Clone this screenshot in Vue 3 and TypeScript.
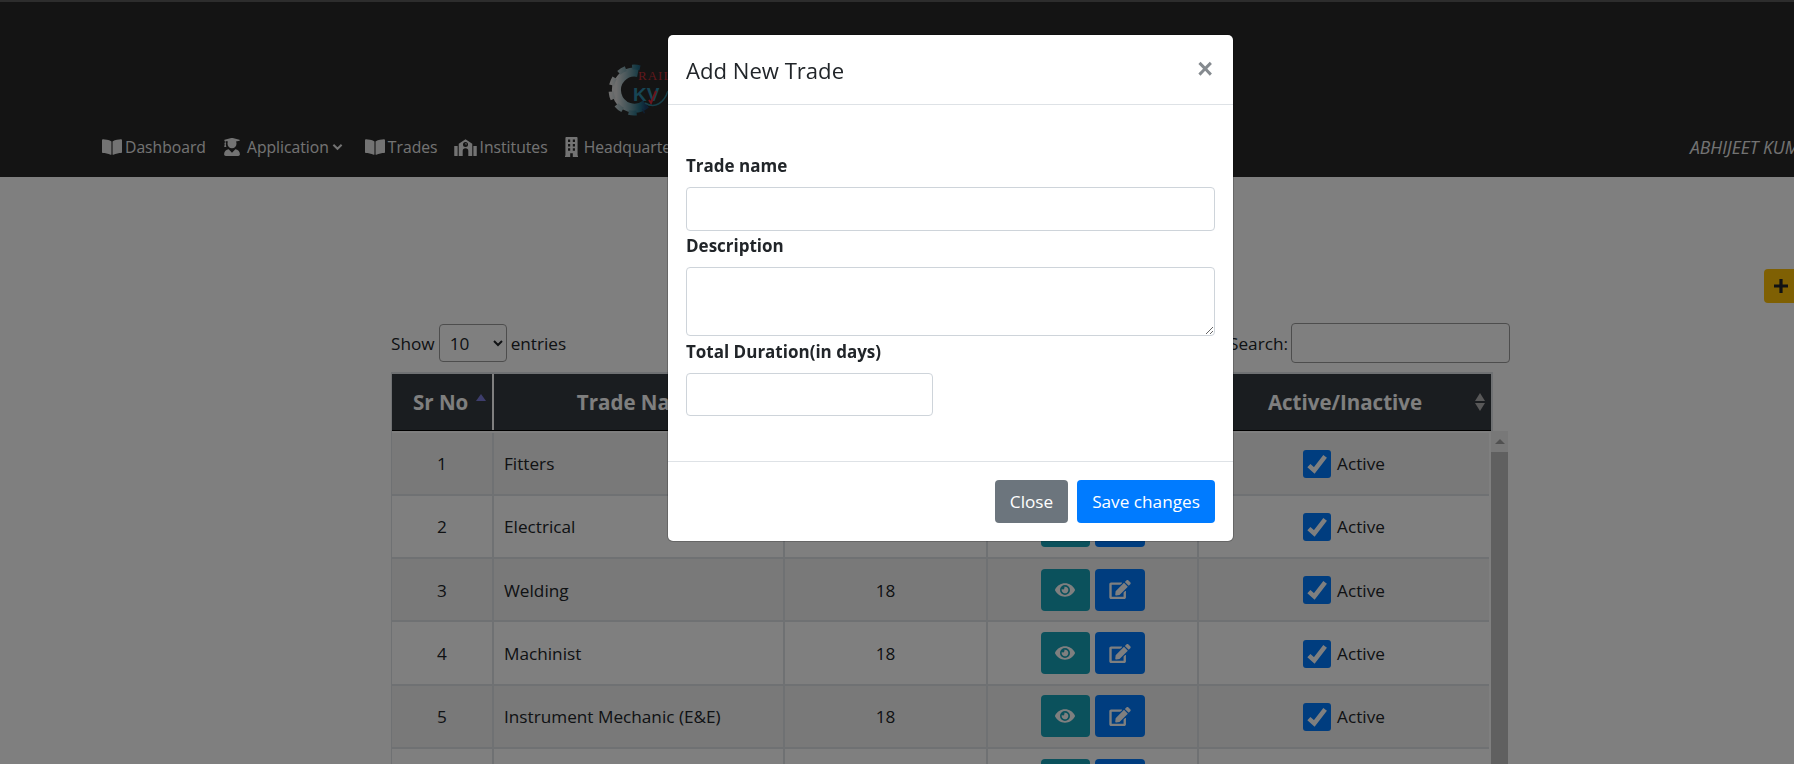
<script setup lang="ts">
interface Row { no: string; name: string; dur: string }
const rows: Row[] = [
  { no: '1', name: 'Fitters', dur: '18' },
  { no: '2', name: 'Electrical', dur: '18' },
  { no: '3', name: 'Welding', dur: '18' },
  { no: '4', name: 'Machinist', dur: '18' },
  { no: '5', name: 'Instrument Mechanic (E&E)', dur: '18' },
  { no: '', name: '', dur: '' },
]
const book = 'M542.22 32.05c-54.8 3.11-163.72 14.43-230.96 55.59-4.64 2.84-7.27 7.89-7.27 13.17v363.87c0 11.55 12.63 18.85 23.28 13.49 69.18-34.82 169.23-44.32 218.7-46.92 16.89-.89 30.02-14.43 30.02-30.66V62.75c.01-17.71-15.35-31.74-33.77-30.7zM264.73 87.64C197.5 46.48 88.58 35.17 33.78 32.05 15.36 31.01 0 45.04 0 62.75V400.6c0 16.24 13.13 29.78 30.02 30.66 49.49 2.6 149.59 12.11 218.77 46.95 10.62 5.35 23.21-1.94 23.21-13.46V100.63c0-5.29-2.62-10.14-7.27-12.99z'
const grad = 'M319.4 320.6L224 416l-95.4-95.4C57.1 323.7 0 382.2 0 454.4v9.6c0 26.5 21.5 48 48 48h352c26.5 0 48-21.5 48-48v-9.6c0-72.2-57.1-130.7-128.6-133.8zM13.6 79.8l6.4 1.5v58.4c-7 4.2-12 11.5-12 20.3 0 8.4 4.6 15.4 11.1 19.7L3.5 242c-1.7 6.9 2.1 14 7.6 14h41.8c5.5 0 9.3-7.1 7.6-14l-15.6-62.3C51.4 175.4 56 168.4 56 160c0-8.8-5-16.1-12-20.3V87.1l66 15.9c-8.6 17.2-14 36.4-14 57 0 70.7 57.3 128 128 128s128-57.3 128-128c0-20.6-5.3-39.8-14-57l96.3-23.2c18.2-4.4 18.2-27.1 0-31.5l-190.4-46c-13-3.1-26.7-3.1-39.7 0L13.6 48.2c-18.1 4.4-18.1 27.2 0 31.6z'
const school = 'M0 224h96v288H16c-9 0-16-7-16-16zM544 224h96v272c0 9-7 16-16 16h-80zM320 32L128 160v352h112V368a80 80 0 0 1 160 0v144h112V160zM320 112a72 72 0 1 1 0 144 72 72 0 0 1 0-144zM320 144v44h36v-22h-14v-22z'
const building = 'M32 0h384c18 0 32 14 32 32v448h16v32H272v-96h-96v96H-16v-32h16V32C0 14 14 0 32 0zM96 64v64h80V64zM272 64v64h80V64zM96 176v64h80v-64zM272 176v64h80v-64zM96 288v64h80v-64zM272 288v64h80v-64z'
const eye = 'M572.52 241.4C518.29 135.59 410.93 64 288 64S57.68 135.64 3.48 241.41a32.35 32.35 0 0 0 0 29.19C57.71 376.41 165.07 448 288 448s230.32-71.64 284.52-177.41a32.35 32.35 0 0 0 0-29.19zM288 400a144 144 0 1 1 144-144 143.93 143.93 0 0 1-144 144zm0-240a95.31 95.31 0 0 0-25.31 3.79 47.85 47.85 0 0 1-66.9 66.9A95.78 95.78 0 1 0 288 160z'
const edit = 'M402.6 83.2l90.2 90.2c3.8 3.8 3.8 10 0 13.8L274.4 405.6l-92.8 10.3c-12.4 1.4-22.9-9.1-21.5-21.5l10.3-92.8L388.8 83.2c3.8-3.8 10-3.8 13.8 0zm162-22.9l-48.8-48.8c-15.2-15.2-39.9-15.2-55.2 0l-35.4 35.4c-3.8 3.8-3.8 10 0 13.8l90.2 90.2c3.8 3.8 10 3.8 13.8 0l35.4-35.4c15.2-15.3 15.2-40 0-55.2zM384 346.2V448H64V128h229.8c3.2 0 6.2-1.3 8.5-3.5l40-40c7.6-7.6 2.2-20.5-8.5-20.5H48C21.5 64 0 85.5 0 112v352c0 26.5 21.5 48 48 48h352c26.5 0 48-21.5 48-48V306.2c0-10.7-12.9-16-20.5-8.5l-40 40c-2.2 2.3-3.5 5.3-3.5 8.5z'
</script>

<template>
  <div class="page">
    <header class="navbar">
      <div class="brand">
        <svg class="logo" viewBox="0 0 60 52" width="60" height="52">
          <defs>
            <linearGradient id="gearFill" x1="0" y1="0" x2="1" y2="0">
              <stop offset="0" stop-color="#dcdcdc" />
              <stop offset="0.5" stop-color="#6f9aa4" />
              <stop offset="0.8" stop-color="#256f86" />
              <stop offset="1" stop-color="#1c3f6a" />
            </linearGradient>
          </defs>
          <path d="M30 7.500A18 18 0 1 0 38 39" fill="none" stroke="url(#gearFill)" stroke-width="9" />
          <path d="M32 2.800A23 23 0 1 0 36 45.800" fill="none" stroke="url(#gearFill)" stroke-width="5" stroke-dasharray="8 6.500" />
          <text x="30" y="15" class="rail">RAIL</text>
          <text x="25" y="36" class="kv">KV</text>
          <path d="M41 35l2 3 5-12" fill="none" stroke="#d92b3a" stroke-width="2" />
          <path d="M37 38C47 44 56 38 60 26" fill="none" stroke="#2f7f92" stroke-width="1.500" />
        </svg>
      </div>
      <nav class="links">
        <ul class="menu">
          <li class="item it-dash"><svg class="ic" viewBox="0 0 576 512" width="20" height="18"><path :d="book" /></svg>Dashboard</li>
          <li class="item it-app"><svg class="ic ic-grad" viewBox="0 0 448 512" width="16" height="18"><path :d="grad" /></svg>Application<svg class="chev" viewBox="0 0 12 8" width="11" height="8"><path d="M1.500 1.500L6 6l4.500-4.500" fill="none" stroke="currentColor" stroke-width="2.200" /></svg></li>
          <li class="item it-tr"><svg class="ic" viewBox="0 0 576 512" width="20" height="18"><path :d="book" /></svg>Trades</li>
          <li class="item it-in"><svg class="ic" viewBox="0 0 640 512" width="23" height="18"><path :d="school" fill-rule="evenodd" /></svg>Institutes</li>
          <li class="item it-hq"><svg class="ic ic-hq" viewBox="-16 0 480 512" width="13" height="20" preserveAspectRatio="none"><path :d="building" fill-rule="evenodd" /></svg>Headquarters</li>
        </ul>
        <span class="user">ABHIJEET KUMAR</span>
      </nav>
    </header>

    <main class="content">
      <div class="add-row">
        <button class="add" type="button">
          <svg viewBox="0 0 16 16" width="16" height="16"><path d="M6.400 1h3.200v5.400H15v3.200H9.600V15H6.400V9.600H1V6.400h5.400z" /></svg>
        </button>
      </div>

      <div class="tools">
        <label class="len">Show
          <select class="len-sel"><option>10</option><option>25</option></select>
          entries</label>
        <label class="search">Search: <input class="search-in" type="search" /></label>
      </div>

      <div class="head-wrap">
        <div class="cols head">
          <div class="th th-first">Sr No<span class="tri-up sort-one"></span></div>
          <div class="th">Trade Name</div>
          <div class="th">Duration</div>
          <div class="th">Action</div>
          <div class="th th-last">Active/Inactive
            <span class="sorts"><i class="tri-up"></i><i class="tri-down"></i></span>
          </div>
        </div>
      </div>

      <div class="body-wrap">
        <div class="tbody">
          <div v-for="(r, i) in rows" :key="i" class="cols body-cols row" :class="{ odd: i % 2 === 0 }">
            <div class="td center">{{ r.no }}</div>
            <div class="td name">{{ r.name }}</div>
            <div class="td center">{{ r.dur }}</div>
            <div class="td center actions">
              <span class="btn-sq teal"><svg viewBox="0 0 576 512" width="20" height="18"><path :d="eye" /></svg></span>
              <span class="btn-sq blue"><svg viewBox="0 0 576 512" width="22" height="19"><path :d="edit" /></svg></span>
            </div>
            <div class="td center status">
              <span class="check"><svg viewBox="0 0 24 24" width="26" height="26"><path d="M4.500 13.500l5 4.500L19.500 5" fill="none" stroke="#fff" stroke-width="4.200" /></svg></span>
              <span>Active</span>
            </div>
          </div>
        </div>
        <div class="scrollbar">
          <div class="sb-up"><span class="tri"></span></div>
          <div class="sb-thumb"></div>
        </div>
      </div>
    </main>

    <div class="backdrop"></div>

    <section class="modal">
      <div class="m-head">
        <h5 class="m-title">Add New Trade</h5>
        <span class="m-close">×</span>
      </div>
      <div class="m-body">
        <label class="f-label">Trade name</label>
        <input class="f-in f-first" type="text" />
        <label class="f-label">Description</label>
        <textarea class="f-in f-ta"></textarea>
        <label class="f-label">Total Duration(in days)</label>
        <input class="f-in f-short" type="number" />
      </div>
      <div class="m-foot">
        <button class="m-btn gray" type="button">Close</button>
        <button class="m-btn primary" type="button">Save changes</button>
      </div>
    </section>
  </div>
</template>

<style>
html, body { margin: 0; height: 100%; overflow: hidden; background: #fff; }
</style>

<style scoped>
.page {
  position: relative;
  width: 1794px;
  height: 764px;
  overflow: hidden;
  background: #fff;
  font-family: "Open Sans", "Noto Sans", sans-serif;
  font-size: 17.2px;
  color: #212529;
}
.navbar {
  height: 175px;
  background: #282828;
  border-top: 2px solid #5a5a5a;
  display: flex;
  flex-direction: column;
}
.brand { height: 123px; padding: 63px 0 0 608px; box-sizing: border-box; }
.logo { display: block; overflow: visible; }
.rail { font-family: "Liberation Serif", serif; font-size: 13px; fill: #c23038; letter-spacing: 1px; }
.kv { font-family: "Liberation Sans", sans-serif; font-size: 19px; font-weight: 700; fill: #2f8ba8; }
.links { display: flex; align-items: center; height: 44px; padding-left: 102px; }
.menu { list-style: none; margin: 0; padding: 0; display: flex; align-items: center; width: 1588px; flex: none; color: #e6e6e6; font-size: 15.7px; }
.item { display: flex; align-items: center; white-space: nowrap; }
.ic { fill: currentColor; flex: none; margin-right: 3px; }
.ic-grad { margin-right: 7px; }
.ic-hq { margin-right: 6px; }
.chev { margin-left: 3px; }
.it-app { margin-left: 18px; }
.it-tr { margin-left: 22px; }
.it-in { margin-left: 16px; }
.it-hq { margin-left: 17px; }
.user { flex: none; font-style: italic; color: #e6e6e6; white-space: nowrap; font-size: 17.5px; }

.add-row { display: flex; margin-top: 92px; height: 34px; padding-left: 1764px; }
.add {
  flex: none; width: 48px; height: 34px; padding: 0 0 0 9px; border: 0; border-radius: 4px;
  background: #ffc107; display: flex; align-items: center; justify-content: flex-start;
}
.add svg { fill: #212529; }
.tools {
  margin: 20px 0 0 391px; width: 1119px; height: 40px;
  display: flex; justify-content: space-between; align-items: center;
}
.len { display: flex; align-items: center; gap: 4px; }
.len-sel {
  width: 68px; height: 38px; border: 1px solid #9a9a9a; border-radius: 4px; background: #fff;
  font: inherit; color: #212529; padding-left: 6px;
}
.search { display: flex; align-items: center; gap: 3px; }
.search-in {
  width: 219px; height: 40px; box-sizing: border-box; border: 1px solid #9a9a9a; border-radius: 4px;
  background: #fff; padding: 0; font: inherit;
}
.head-wrap {
  margin: 9px 0 0 391px; width: 1102px; box-sizing: border-box;
  border: 1px solid #dee2e6; border-top-width: 2px; border-bottom: 0; border-right-width: 2px;
}
.cols { display: grid; grid-template-columns: 102px 291px 203px 211px 292px; }
.body-cols { grid-template-columns: 102px 291px 203px 211px 290px; }
.head { height: 57px; background: #343a40; border-bottom: 1px solid #000; box-sizing: border-box; }
.th {
  display: flex; align-items: center; justify-content: center; position: relative;
  color: #fff; font-weight: 700; font-size: 20.5px; white-space: nowrap;
}
.th-first { border-right: 2px solid #fff; justify-content: flex-start; padding-left: 21px; box-sizing: border-box; }
.tri-up, .tri-down { display: block; width: 0; height: 0; border-left: 5px solid transparent; border-right: 5px solid transparent; }
.tri-up { border-bottom: 8px solid #b0b0b0; }
.tri-down { border-top: 8px solid #b0b0b0; margin-top: 2px; }
.sort-one { position: absolute; right: 6px; top: 20px; border-bottom: 7px solid #7b7bd8; }
.sorts { position: absolute; right: 6px; top: 19px; display: flex; flex-direction: column; }

.body-wrap { margin-left: 391px; width: 1119px; display: flex; border-left: 1px solid #dee2e6; box-sizing: border-box; height: 333px; }
.tbody { width: 1097px; flex: none; padding-top: 1.5px; }
.row { height: 63.330px; box-sizing: border-box; border-bottom: 2px solid #dee2e6; }
.row.odd { background: #f2f2f2; }
.td {
  display: flex; align-items: center; border-right: 2px solid #dee2e6; box-sizing: border-box; padding-top: 1px;
}
.td:last-child { border-right: 0; }
.center { justify-content: center; }
.name { padding-left: 10px; }
.actions { gap: 5px; padding-top: 0; }
.btn-sq {
  height: 42px; display: flex; align-items: center; justify-content: center; border-radius: 4px; color: #fff;
}
.btn-sq svg { fill: currentColor; }
.teal { width: 49px; background: #17a2b8; }
.blue { width: 50px; background: #007bff; }
.status { gap: 6px; }
.check {
  width: 28px; height: 28px; background: #007bff; border-radius: 3px;
  display: flex; align-items: center; justify-content: center;
}
.scrollbar { margin-left: 2px; width: 17px; flex: none; background: #f1f1f1; display: flex; flex-direction: column; }
.sb-up { height: 21px; display: flex; align-items: center; justify-content: center; }
.tri { width: 0; height: 0; border-left: 5px solid transparent; border-right: 5px solid transparent; border-bottom: 5px solid #a3a3a3; }
.sb-thumb { flex: 1; background: #c1c1c1; }

.backdrop { position: fixed; inset: 0; background: rgba(0, 0, 0, .5); }
.modal {
  position: fixed; left: 668px; top: 35px; width: 565px; height: 506px;
  background: #fff; border-radius: 5px; box-shadow: 0 0 0 1px rgba(0,0,0,.2);
  display: flex; flex-direction: column;
}
.m-head {
  height: 70px; box-sizing: border-box; padding: 0 18px; border-bottom: 1px solid #dee2e6;
  display: flex; align-items: center; justify-content: space-between;
}
.m-title { margin: 1px 0 0; font-size: 22.1px; font-weight: 400; color: #212529; }
.m-close { font-family: "Liberation Sans", sans-serif; font-size: 27px; font-weight: 700; color: #858a8f; line-height: 1; margin-top: -1px; margin-right: 2px; }
.m-body { height: 356px; box-sizing: border-box; padding: 47px 18px 0; display: flex; flex-direction: column; }
.f-label { display: block; height: 27px; line-height: 27px; margin-bottom: 8px; font-weight: 700; font-size: 17px; }
.f-in {
  display: block; box-sizing: border-box; width: 529px; height: 44px; margin: 0 0 2px;
  border: 1px solid #ced4da; border-radius: 4px; background: #fff; font: inherit;
}
.f-first { margin-bottom: 1px; }
.f-ta { height: 69px; }
.f-short { width: 247px; height: 43px; }
.m-foot {
  flex: 1; box-sizing: border-box; border-top: 1px solid #dee2e6; padding-right: 18px;
  display: flex; align-items: center; justify-content: flex-end; gap: 9px;
}
.m-btn {
  height: 43px; border: 0; border-radius: 4px; color: #fff; font: inherit; font-size: 17.2px; padding: 0;
}
.gray { width: 73px; background: #6c757d; }
.primary { width: 138px; background: #007bff; }
</style>
